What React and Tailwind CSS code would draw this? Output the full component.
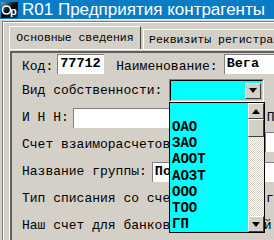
import React from 'react'

const mono = { fontFamily: '"Liberation Mono", "Courier New", monospace' }

function Field({ className = '', children }) {
  return (
    <div
      className={`shrink-0 h-[20px] bg-white border-t border-l border-[#808080] border-r-white border-b-white flex items-center pl-[2px] font-bold text-[13.5px] overflow-hidden whitespace-nowrap ${className}`}
    >
      {children}
    </div>
  )
}

function ArrowButton({ up = false, className = '' }) {
  return (
    <div className={`shrink-0 w-[16px] h-[16px] bg-[#d4d0c8] border border-t-white border-l-white border-r-[#404040] border-b-[#404040] flex items-center justify-center ${className}`}>
      <svg width="8" height="5" viewBox="0 0 8 5">
        {up ? <path d="M0 5 L4 0 L8 5 Z" fill="#000" /> : <path d="M0 0 L8 0 L4 5 Z" fill="#000" />}
      </svg>
    </div>
  )
}

function Row({ className = 'h-[27px]', children }) {
  return <div className={`flex items-center whitespace-nowrap ${className}`}>{children}</div>
}

function Label({ className = '', children }) {
  return <span className={`shrink-0 ${className}`}>{children}</span>
}

export default function App() {
  const items = ['', 'ОАО', 'ЗАО', 'АООТ', 'АОЗТ', 'ООО', 'ТОО', 'ГП']

  return (
    <div className="relative w-[274px] h-[240px] overflow-hidden bg-[#d4d0c8] text-black" style={mono}>
      {/* Title bar */}
      <div className="h-[19px] bg-[#0a7cc6] flex items-center">
        <svg width="19" height="19" viewBox="0 0 19 19" className="shrink-0">
          <defs>
            <linearGradient id="ig" x1="0" y1="0" x2="1" y2="1">
              <stop offset="0" stopColor="#6fa8dc" />
              <stop offset="0.5" stopColor="#000" />
              <stop offset="1" stopColor="#1a3d7a" />
            </linearGradient>
          </defs>
          <rect x="1" y="2" width="17" height="16" fill="url(#ig)" />
          <circle cx="6.5" cy="10" r="4" fill="none" stroke="#fff" strokeWidth="1.6" />
          <text x="10" y="15" fill="#fff" fontSize="11" fontFamily="Liberation Sans" fontWeight="bold">p</text>
        </svg>
        <span className="ml-[3px] text-white text-[17px] leading-none whitespace-nowrap" style={{ fontFamily: '"Liberation Sans", Arial, sans-serif' }}>
          R01 Предприятия контрагенты
        </span>
      </div>

      {/* Window body */}
      <div className="border-t border-white h-[221px]">
        <div className="ml-[2px] mt-[1px] h-full border-l border-t border-[#808080]">
          <div className="h-full border-l border-t border-white pl-[5px] pt-[2px]">
            {/* Tabs */}
            <div className="flex items-end h-[24px] text-[11.5px] whitespace-nowrap overflow-hidden">
              <div className="shrink-0 h-[23px] w-[132px] border-t border-l border-white border-r border-r-[#404040] flex items-center justify-center">
                Основные сведения
              </div>
              <div className="shrink-0 h-[20px] ml-[2px] w-[140px] border-t border-l border-white flex items-center pl-[5px]">
                Реквизиты регистрации
              </div>
            </div>
            {/* Panel */}
            <div className="border-t border-l border-white h-[200px]">
              <div className="mt-px h-full border-t-2 border-l-2 border-t-[#606060] border-l-[#606060] pl-[10px] text-[13px] overflow-hidden">
                <Row className="h-[24px] items-start pt-px">
                  <Label className="mt-[3px]">Код:</Label>
                  <Field className="ml-[4px] w-[47px]">77712</Field>
                  <Label className="ml-[12px] mt-[3px]">Наименование:</Label>
                  <Field className="ml-[6px] w-[80px]">Вега</Field>
                </Row>
                <Row>
                  <Label>Вид собственности:</Label>
                  <div className="shrink-0 ml-[7px] w-[95px] h-[23px] border border-t-[#808080] border-l-[#808080] border-r-white border-b-white">
                    <div className="h-full border border-t-black border-l-black border-r-[#d4d0c8] border-b-[#d4d0c8] bg-[#00ffff] flex justify-end items-center">
                      <ArrowButton className="mr-px" />
                    </div>
                  </div>
                </Row>
                <Row>
                  <Label>И Н Н:</Label>
                  <Field className="ml-[4px] w-[110px] h-[18px]" />
                  <Label className="ml-[84px]">ППП:</Label>
                </Row>
                <Row>
                  <Label>Счет взаиморасчетов:</Label>
                  <Field className="ml-[87px] w-[60px] mt-[-6px]" />
                </Row>
                <Row>
                  <Label>Название группы:</Label>
                  <Field className="ml-[5px] w-[130px]">Поставщики</Field>
                </Row>
                <Row>
                  <Label>Тип списания со счета аванса в</Label>
                  <Label className="ml-[10px]">группу:</Label>
                </Row>
                <Row>
                  <Label>Наш счет для банковских операций:</Label>
                </Row>
              </div>
            </div>
          </div>
        </div>
      </div>

      {/* Open dropdown list */}
      <div className="absolute left-[169px] top-[102px] w-[96px] h-[131px] border border-black bg-[#00ffff] flex">
        <div className="flex-1 flex flex-col">
          {items.map((it, i) => (
            <div key={i} className="h-[16.2px] flex items-center pl-[2px] font-bold text-[14px] leading-none">
              {it}
            </div>
          ))}
        </div>
        <div className="w-[16px] flex flex-col">
          <ArrowButton up />
          <div className="h-[18px] bg-[#d4d0c8] border border-t-white border-l-white border-r-[#404040] border-b-[#404040]" />
          <div className="flex-1 bg-[repeating-conic-gradient(#d4d0c8_0_25%,#ffffff_0_50%)] bg-[length:2px_2px]" />
          <ArrowButton />
        </div>
      </div>
    </div>
  )
}
